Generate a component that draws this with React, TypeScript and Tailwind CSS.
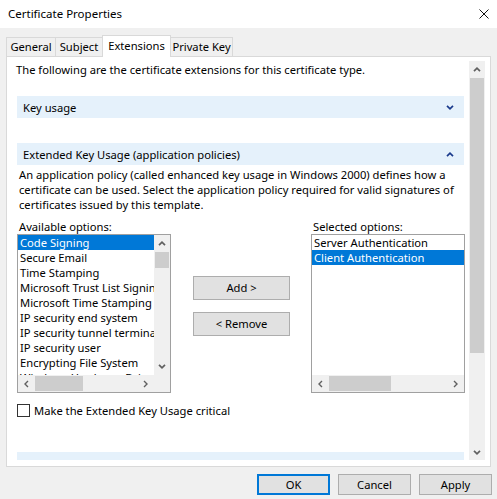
import React from "react";

const availableOptions = [
  "Code Signing",
  "Secure Email",
  "Time Stamping",
  "Microsoft Trust List Signing",
  "Microsoft Time Stamping",
  "IP security end system",
  "IP security tunnel termination",
  "IP security user",
  "Encrypting File System",
  "Windows Hardware Driver Verification",
];

const selectedOptions = ["Server Authentication", "Client Authentication"];

function Chevron({ up, className }: { up?: boolean; className?: string }) {
  return (
    <svg width="8" height="5" viewBox="0 0 8 5" className={className}>
      <path
        d={up ? "M1 4.2 L4 1.2 L7 4.2" : "M1 0.8 L4 3.8 L7 0.8"}
        fill="none"
        stroke="currentColor"
        strokeWidth="1.7"
      />
    </svg>
  );
}

function SideArrow({ right }: { right?: boolean }) {
  return (
    <svg width="5" height="8" viewBox="0 0 5 8" className="text-[#606060]">
      <path
        d={right ? "M1 1 L4 4 L1 7" : "M4 1 L1 4 L4 7"}
        fill="none"
        stroke="currentColor"
        strokeWidth="1.4"
      />
    </svg>
  );
}

function HScroll({ thumbWidth }: { thumbWidth: number }) {
  return (
    <div className="flex-1 h-[17px] bg-[#f0f0f0] flex items-center">
      <div className="w-[17px] h-full flex items-center justify-center">
        <SideArrow />
      </div>
      <div className="h-[15px] bg-[#cdcdcd]" style={{ width: thumbWidth }} />
      <div className="flex-1" />
      <div className="w-[17px] h-full flex items-center justify-center">
        <SideArrow right />
      </div>
    </div>
  );
}

function ListBox({
  items,
  selected,
  vscroll,
  thumbWidth,
}: {
  items: string[];
  selected: string;
  vscroll?: boolean;
  thumbWidth: number;
}) {
  return (
    <div className="w-[154px] h-[159px] border border-[#a0a0a0] bg-white flex flex-col">
      <div className="flex flex-1 min-h-0">
        <div className="flex-1 overflow-hidden">
          {items.map((it) => (
            <div
              key={it}
              className={
                it === selected
                  ? "h-[15px] leading-[15px] pl-[2px] whitespace-nowrap bg-[#0078d7] text-white"
                  : "h-[15px] leading-[15px] pl-[2px] whitespace-nowrap"
              }
            >
              {it}
            </div>
          ))}
        </div>
        {vscroll && (
          <div className="w-[16px] bg-[#f0f0f0] flex flex-col">
            <div className="h-[17px] flex items-center justify-center text-[#606060]">
              <Chevron up />
            </div>
            <div className="h-[16px] mx-px bg-[#cdcdcd]" />
            <div className="flex-1" />
            <div className="h-[17px] flex items-center justify-center text-[#606060]">
              <Chevron />
            </div>
          </div>
        )}
      </div>
      <div className="flex">
        <HScroll thumbWidth={thumbWidth} />
        {vscroll && <div className="w-[16px] h-[17px] bg-[#f0f0f0]" />}
      </div>
    </div>
  );
}

function SectionBar({ title, up, className }: { title: string; up?: boolean; className?: string }) {
  return (
    <div
      className={
        "ml-[7px] mr-[5px] h-[22px] shrink-0 bg-[#e5f1fb] flex items-center justify-between pl-[6px] pr-[10px] " +
        (className || "")
      }
    >
      <span className="leading-[15px] whitespace-nowrap">{title}</span>
      <Chevron up={up} className="text-[#1a3a8c]" />
    </div>
  );
}

function WinButton({ label, className }: { label: string; className?: string }) {
  return (
    <div
      className={
        "h-[21px] w-[73px] bg-[#e1e1e1] flex items-center justify-center leading-none " +
        (className || "border border-[#adadad]")
      }
    >
      {label}
    </div>
  );
}

export default function App() {
  return (
    <div className="w-[497px] h-[499px] bg-[#f0f0f0] flex flex-col text-[11.2px] text-black font-['Segoe_UI','Noto_Sans',sans-serif] overflow-hidden">
      {/* Title bar */}
      <div className="h-[28px] bg-white flex items-center justify-between pl-[8px] pr-[8px] shrink-0">
        <span className="text-[11.5px]">Certificate Properties</span>
        <svg width="10" height="10" viewBox="0 0 10 10">
          <path d="M0.5 0.5 L9.5 9.5 M9.5 0.5 L0.5 9.5" stroke="#111" strokeWidth="1" />
        </svg>
      </div>

      {/* Tabs */}
      <div className="h-[28px] px-[6px] flex items-end shrink-0 whitespace-nowrap">
        <div className="h-[19px] w-[50px] border border-b-0 border-[#d9d9d9] flex items-center justify-center">General</div>
        <div className="h-[19px] w-[48px] -ml-px border border-b-0 border-[#d9d9d9] flex items-center justify-center">Subject</div>
        <div className="relative z-10 h-[22px] w-[69px] -ml-px -mb-px bg-white border border-b-0 border-[#d9d9d9] flex items-start pt-[2px] justify-center">Extensions</div>
        <div className="h-[19px] w-[63px] -ml-px border border-b-0 border-[#d9d9d9] flex items-center justify-center">Private Key</div>
      </div>

      {/* Tab panel */}
      <div className="mx-[6px] w-[485px] h-[411px] shrink-0 border border-[#d9d9d9] bg-white pt-[4px] pl-[3px] pr-[5px] pb-[6px] flex">
        <div className="flex-1 overflow-hidden flex flex-col">
          <div className="mt-px pl-[6px] leading-[15px] shrink-0">
            The following are the certificate extensions for this certificate type.
          </div>

          <SectionBar title="Key usage" className="mt-[19px]" />
          <SectionBar title="Extended Key Usage (application policies)" up className="mt-[25px]" />

          <p className="mt-[2px] pl-[9px] leading-[15px] whitespace-nowrap shrink-0">
            An application policy (called enhanced key usage in Windows 2000) defines how a
            <br />
            certificate can be used. Select the application policy required for valid signatures of
            <br />
            certificates issued by this template.
          </p>

          <div className="mt-[7px] pl-[7px] flex shrink-0">
            <div className="flex flex-col w-[154px]">
              <div className="pl-[2px] leading-[15px]">Available options:</div>
              <ListBox items={availableOptions} selected="Code Signing" vscroll thumbWidth={48} />
            </div>
            <div className="ml-[22px] w-[97px] pt-[57px] flex flex-col gap-[12px]">
              <div className="h-[24px] border border-[#adadad] bg-[#e1e1e1] flex items-center justify-center">Add &gt;</div>
              <div className="h-[24px] border border-[#adadad] bg-[#e1e1e1] flex items-center justify-center">&lt; Remove</div>
            </div>
            <div className="ml-[21px] flex flex-col w-[154px]">
              <div className="pl-[2px] leading-[15px]">Selected options:</div>
              <ListBox items={selectedOptions} selected="Client Authentication" thumbWidth={62} />
            </div>
          </div>

          <div className="mt-[11px] pl-[7px] flex items-center gap-[4px] shrink-0">
            <div className="w-[13px] h-[13px] border border-[#333] bg-white" />
            <span className="leading-[13px]">Make the Extended Key Usage critical</span>
          </div>

          <SectionBar title="Basic constraints" className="mt-[35px]" />
        </div>

        {/* Vertical scrollbar */}
        <div className="w-[16px] bg-[#f0f0f0] flex flex-col shrink-0">
          <div className="h-[17px] flex items-center justify-center text-[#606060]">
            <Chevron up />
          </div>
          <div className="h-[275px] mx-px bg-[#cdcdcd]" />
          <div className="flex-1" />
          <div className="h-[16px] flex items-center justify-center text-[#606060]">
            <Chevron />
          </div>
        </div>
      </div>

      {/* Footer */}
      <div className="pt-[7px] pr-[5px] flex justify-end gap-[8px]">
        <WinButton label="OK" className="border-2 border-[#0078d7]" />
        <WinButton label="Cancel" />
        <WinButton label="Apply" />
      </div>
    </div>
  );
}
